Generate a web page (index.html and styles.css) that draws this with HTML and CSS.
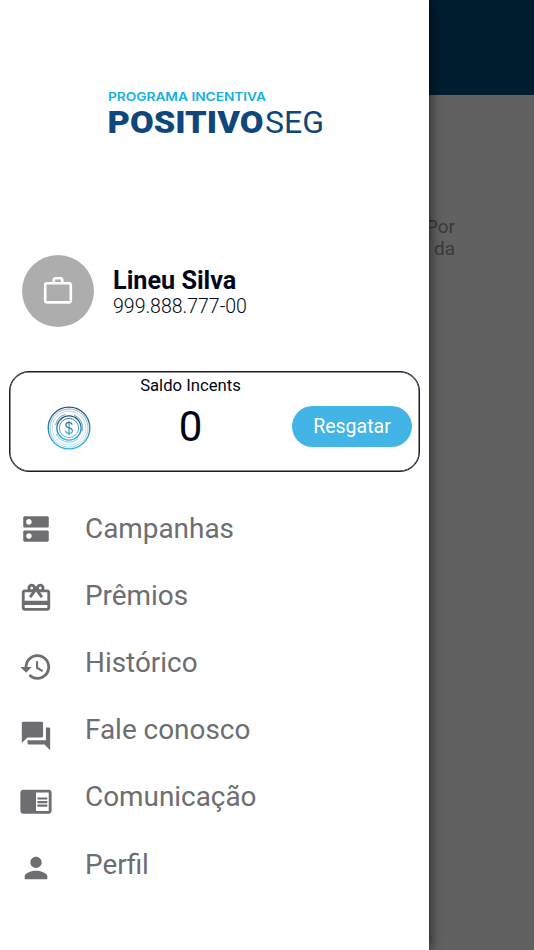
FILE: index.html
```html
<!DOCTYPE html>
<html lang="pt-BR">
<head>
    <meta charset="UTF-8">
    <meta name="viewport" content="width=device-width, initial-scale=1.0">
    <title>Positivo Seg</title>
    <link rel="stylesheet" href="styles.css">
</head>
<body>
    <div class="page">
        <div class="page-header"></div>
        <p class="page-text">Por<br>da</p>
    </div>

    <aside class="drawer">
        <svg class="logo" viewBox="0 0 220 46" role="img">
            <text class="logo-program" x="0" y="13.3" textLength="158" lengthAdjust="spacingAndGlyphs">PROGRAMA INCENTIVA</text>
            <text class="logo-bold" x="-0.5" y="44.6" textLength="156" lengthAdjust="spacingAndGlyphs">POSITIVO</text>
            <text class="logo-light" x="157" y="44.6" textLength="59" lengthAdjust="spacingAndGlyphs">SEG</text>
        </svg>

        <div class="user">
            <div class="avatar">
                <svg viewBox="0 0 30 30">
                    <rect x="2.2" y="7.2" width="25.6" height="19.2" rx="2"/>
                    <path d="M10.8 7V3.800q0-1.600 1.600-1.600h5.200q1.600 0 1.600 1.600V7"/>
                </svg>
            </div>
            <div class="user-info">
                <div class="user-name">Lineu Silva</div>
                <div class="user-cpf">999.888.777-00</div>
            </div>
        </div>

        <div class="balance">
            <svg class="coin" viewBox="0 0 44 44">
                <defs>
                    <linearGradient id="ring" x1="0" y1="0" x2="0" y2="1">
                        <stop offset="0" stop-color="#1b527b"/>
                        <stop offset="1" stop-color="#35b3e4"/>
                    </linearGradient>
                </defs>
                <g fill="none" stroke="url(#ring)">
                    <circle cx="22" cy="22" r="20.8" stroke-width="1.3"/>
                    <circle cx="22" cy="22" r="19" stroke-width=".7" opacity=".65"/>
                    <circle cx="22" cy="22" r="16.8" stroke-width=".7" opacity=".4"/>
                    <path d="M8.5 19A14 14 0 0 1 18.5 8.4M27 9A14 14 0 0 1 35.6 25M31 32.8A14 14 0 0 1 9.3 28" stroke-width=".8" opacity=".8"/>
                    <circle cx="22" cy="22" r="12.1" stroke-width="1.4"/>
                    <circle cx="22" cy="22" r="9.6" stroke-width=".8"/>
                    <path d="M25.2 18.7c-.3-1.4-1.4-2.2-3.2-2.2-1.9 0-3.2 1-3.2 2.6 0 3.7 6.6 1.9 6.6 5.6 0 1.7-1.4 2.7-3.4 2.7-2 0-3.3-1-3.5-2.6" stroke-width="1.1"/>
                    <path d="M22 14.8v14.4" stroke="#2a83b2" stroke-width="1"/>
                </g>
            </svg>
            <div class="balance-info">
                <div class="balance-label">Saldo Incents</div>
                <div class="balance-value">0</div>
            </div>
            <button class="redeem">Resgatar</button>
        </div>

        <nav class="menu">
            <a class="menu-item">
                <svg viewBox="0 0 24 24"><path d="M20 13H4c-.55 0-1 .45-1 1v6c0 .55.45 1 1 1h16c.55 0 1-.45 1-1v-6c0-.55-.45-1-1-1zM7 19c-1.100 0-2-.9-2-2s.9-2 2-2 2 .9 2 2-.9 2-2 2zM20 3H4c-.55 0-1 .45-1 1v6c0 .55.45 1 1 1h16c.55 0 1-.45 1-1V4c0-.55-.45-1-1-1zM7 9c-1.100 0-2-.9-2-2s.9-2 2-2 2 .9 2 2-.9 2-2 2z"/></svg>
                <span class="menu-text">Campanhas</span>
            </a>
            <a class="menu-item gift">
                <svg viewBox="0 0 24 24"><path d="M20 6h-2.180c.11-.31.18-.65.18-1 0-1.660-1.340-3-3-3-1.050 0-1.960.54-2.500 1.350l-.5.67-.5-.68C10.960 2.540 10.050 2 9 2 7.340 2 6 3.340 6 5c0 .35.07.69.18 1H4c-1.110 0-1.990.89-1.990 2L2 19c0 1.110.89 2 2 2h16c1.110 0 2-.89 2-2V8c0-1.110-.89-2-2-2zm-5-2c.55 0 1 .45 1 1s-.45 1-1 1-1-.45-1-1 .45-1 1-1zM9 4c.55 0 1 .45 1 1s-.45 1-1 1-1-.45-1-1 .45-1 1-1zm11 15H4v-2h16v2zm0-5H4V8h5.080L7 10.830 8.620 12 11 8.760l1-1.360 1 1.360L15.380 12 17 10.830 14.920 8H20v6z"/></svg>
                <span class="menu-text">Prêmios</span>
            </a>
            <a class="menu-item history">
                <svg viewBox="0 0 24 24"><path d="M13 3c-4.970 0-9 4.030-9 9H1l3.890 3.890.07.14L9 12H6c0-3.870 3.130-7 7-7s7 3.130 7 7-3.130 7-7 7c-1.930 0-3.680-.79-4.940-2.060l-1.420 1.420C8.270 19.990 10.510 21 13 21c4.970 0 9-4.030 9-9s-4.030-9-9-9zm-1 5v5l4.280 2.540.72-1.210-3.500-2.080V8H12z"/></svg>
                <span class="menu-text">Histórico</span>
            </a>
            <a class="menu-item contact">
                <svg viewBox="0 0 24 24"><path d="M21 6h-2v9H6v2c0 .55.45 1 1 1h11l4 4V7c0-.55-.45-1-1-1zm-4 6V3c0-.55-.45-1-1-1H3c-.55 0-1 .45-1 1v14l4-4h10c.55 0 1-.45 1-1z"/></svg>
                <span class="menu-text">Fale conosco</span>
            </a>
            <a class="menu-item news">
                <svg viewBox="0 0 24 24"><path d="M13 12h7v1.500h-7zm0-2.500h7V11h-7zm0 5h7V16h-7zM21 4H3c-1.100 0-2 .9-2 2v13c0 1.100.9 2 2 2h18c1.100 0 2-.9 2-2V6c0-1.100-.9-2-2-2zm0 15h-9V6h9v13z"/></svg>
                <span class="menu-text">Comunicação</span>
            </a>
            <a class="menu-item profile">
                <svg viewBox="0 0 24 24"><path d="M12 12c2.210 0 4-1.790 4-4s-1.790-4-4-4-4 1.790-4 4 1.790 4 4 4zm0 2c-2.670 0-8 1.340-8 4v2h16v-2c0-2.660-5.330-4-8-4z"/></svg>
                <span class="menu-text">Perfil</span>
            </a>
        </nav>
    </aside>
</body>
</html>
```
FILE: styles.css
```css
* {
    box-sizing: border-box;
}

body {
    margin: 0;
    height: 950px;
    overflow: hidden;
    background: #616161;
    font-family: Roboto, sans-serif;
    color: #020618;
}

.page-header {
    height: 95px;
    background: #001d30;
}

.page-text {
    margin: 121px 79px 0 0;
    text-align: right;
    font-size: 19px;
    line-height: 22px;
    color: #3a3a3a;
}

/* menu drawer, lies over the page */
.drawer {
    position: absolute;
    top: 0;
    left: 0;
    width: 429px;
    height: 950px;
    background: #fff;
    box-shadow: 0 0 12px rgba(0, 0, 0, 0.8);
}

.logo {
    display: block;
    width: 220px;
    height: 46px;
    margin: 88px 0 0 108px;
    overflow: visible;
}

.logo-program {
    font: 600 12px Inter, sans-serif;
    fill: #12b0e3;
}

.logo-bold {
    font: 900 32px Roboto, sans-serif;
    fill: #10477a;
}

.logo-light {
    font: 400 32px Roboto, sans-serif;
    fill: #10477a;
}

.user {
    display: flex;
    align-items: center;
    margin: 121px 0 0 22px;
}

.avatar {
    display: flex;
    align-items: center;
    justify-content: center;
    width: 72px;
    height: 72px;
    border-radius: 50%;
    background: #adadad;
}

.avatar svg {
    width: 30px;
    height: 30px;
    fill: none;
    stroke: #fff;
    stroke-width: 2.6;
}

.user-info {
    margin: 5px 0 0 19px;
}

.user-name {
    font-size: 25.2px;
    font-weight: 700;
    line-height: 26px;
}

.user-cpf {
    font-size: 19.5px;
    font-weight: 300;
    line-height: 26px;
}

.balance {
    display: grid;
    grid-template-columns: 81px 1fr 120px;
    align-items: start;
    width: 411px;
    height: 101px;
    margin: 44px 0 0 9px;
    padding-right: 7px;
    border: 1px solid #1a1b2c;
    border-radius: 20px;
    box-shadow: inset 0 0 0 0.5px #1a1b2c;
}

.coin {
    width: 44px;
    height: 44px;
    margin: 34px 0 0 37px;
}

.balance-info {
    text-align: center;
    padding-right: 2px;
}

.balance-label {
    margin-top: 4px;
    font-size: 16.7px;
    line-height: 20px;
}

.balance-value {
    margin-top: 6px;
    font-size: 42px;
    line-height: 50px;
}

.redeem {
    height: 41px;
    margin-top: 34px;
    padding: 0;
    border: none;
    border-radius: 21px;
    background: #42b4e6;
    color: #fff;
    font-family: inherit;
    font-size: 19.5px;
}

.menu {
    margin-top: 23px;
}

.menu-item {
    display: flex;
    align-items: center;
    height: 67.2px;
    padding-left: 19px;
    color: #6d6d72;
}

.menu-item svg {
    width: 34px;
    height: 34px;
    margin-right: 32px;
    fill: currentColor;
}

.menu-text {
    font-size: 27.9px;
    line-height: 34px;
}

.gift svg {
    margin-top: 4px;
}

.history svg {
    margin-top: 9px;
}

.contact svg {
    margin-top: 11px;
}

.news svg {
    margin-top: 8px;
}

.profile svg {
    margin-top: 6px;
}
```
